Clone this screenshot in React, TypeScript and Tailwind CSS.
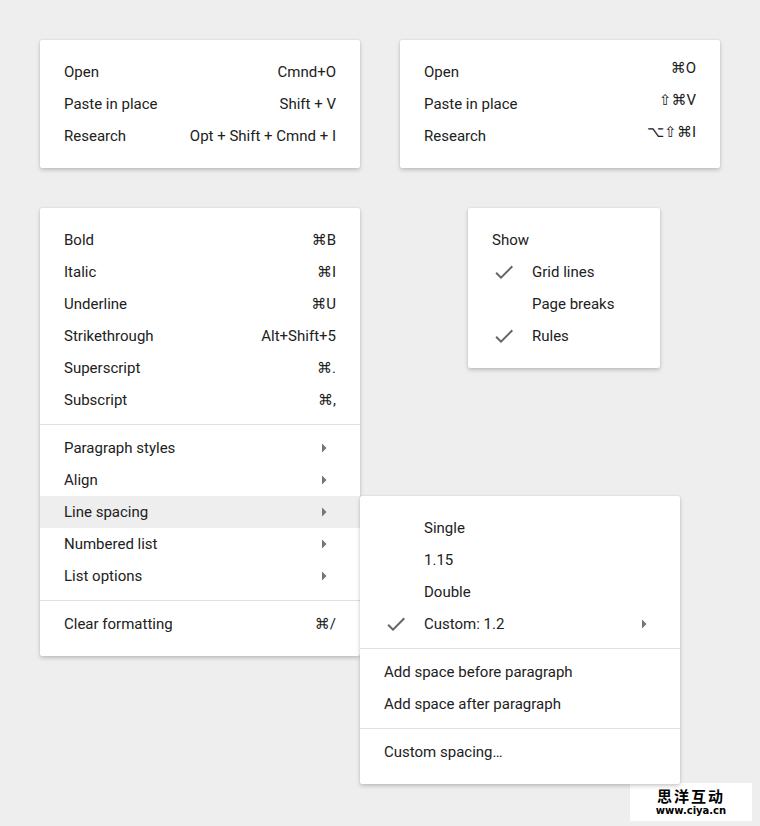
import React from "react";

type Item = {
  label: string;
  shortcut?: string;
  checked?: boolean;
  submenu?: boolean;
  active?: boolean;
};

const CheckIcon = () => (
  <svg width="24" height="24" viewBox="0 0 24 24" className="shrink-0 fill-[#666666]">
    <path d="M9 16.17L4.83 12l-1.42 1.41L9 19 21 7l-1.41-1.41z" />
  </svg>
);

const ArrowRight = () => (
  <svg width="24" height="24" viewBox="0 0 24 24" className="shrink-0 fill-[#757575]">
    <path d="M10 16.5l4.5-4.5L10 7.5z" />
  </svg>
);

const Divider = () => <div className="mt-2 mb-[7px] h-px bg-[#e0e0e0]" />;

const Row = ({
  item,
  indent,
  raiseShortcut,
  children,
}: {
  item: Item;
  indent?: boolean;
  raiseShortcut?: boolean;
  children?: React.ReactNode;
}) => (
  <div
    className={`relative flex h-8 items-center px-6 ${item.active ? "bg-[#eeeeee]" : ""}`}
  >
    {indent && (
      <div className="mr-4 w-6 shrink-0">{item.checked && <CheckIcon />}</div>
    )}
    <span className="flex-1 whitespace-nowrap">{item.label}</span>
    {item.shortcut && (
      <span className={`whitespace-nowrap ${raiseShortcut ? "-translate-y-1" : ""}`}>
        {item.shortcut}
      </span>
    )}
    {item.submenu && <ArrowRight />}
    {children}
  </div>
);

const Card = ({
  className,
  children,
}: {
  className?: string;
  children: React.ReactNode;
}) => (
  <div
    className={`rounded-[2px] bg-white py-4 shadow-[0_2px_4px_rgba(0,0,0,0.2),0_0_2px_rgba(0,0,0,0.08)] ${className ?? ""}`}
  >
    {children}
  </div>
);

const wordy: Item[] = [
  { label: "Open", shortcut: "Cmnd+O" },
  { label: "Paste in place", shortcut: "Shift + V" },
  { label: "Research", shortcut: "Opt + Shift + Cmnd + I" },
];

const symbols: Item[] = [
  { label: "Open", shortcut: "⌘O" },
  { label: "Paste in place", shortcut: "⇧⌘V" },
  { label: "Research", shortcut: "⌥⇧⌘I" },
];

const textStyles: Item[] = [
  { label: "Bold", shortcut: "⌘B" },
  { label: "Italic", shortcut: "⌘I" },
  { label: "Underline", shortcut: "⌘U" },
  { label: "Strikethrough", shortcut: "Alt+Shift+5" },
  { label: "Superscript", shortcut: "⌘." },
  { label: "Subscript", shortcut: "⌘," },
];

const paragraph: Item[] = [
  { label: "Paragraph styles", submenu: true },
  { label: "Align", submenu: true },
  { label: "Line spacing", submenu: true, active: true },
  { label: "Numbered list", submenu: true },
  { label: "List options", submenu: true },
];

const showItems: Item[] = [
  { label: "Grid lines", checked: true },
  { label: "Page breaks" },
  { label: "Rules", checked: true },
];

const spacing: Item[] = [
  { label: "Single" },
  { label: "1.15" },
  { label: "Double" },
  { label: "Custom: 1.2", checked: true, submenu: true },
];

const LineSpacingMenu = () => (
  <Card className="absolute left-full top-0 z-10 w-[320px]">
    {spacing.map((item) => (
      <Row key={item.label} item={item} indent />
    ))}
    <Divider />
    <Row item={{ label: "Add space before paragraph" }} />
    <Row item={{ label: "Add space after paragraph" }} />
    <Divider />
    <Row item={{ label: "Custom spacing…" }} />
  </Card>
);

export default function App() {
  return (
    <div className="relative min-h-[826px] bg-[#eeeeee] p-10 font-['Roboto','DejaVu_Sans',sans-serif] text-[15px] text-[#212121]">
      <div className="flex gap-10">
        <Card className="w-[320px]">
          {wordy.map((item) => (
            <Row key={item.label} item={item} />
          ))}
        </Card>
        <Card className="w-[320px]">
          {symbols.map((item) => (
            <Row key={item.label} item={item} raiseShortcut />
          ))}
        </Card>
      </div>

      <div className="mt-10 flex items-start">
        <Card className="relative w-[320px]">
          {textStyles.map((item) => (
            <Row key={item.label} item={item} />
          ))}
          <Divider />
          {paragraph.map((item) => (
            <Row key={item.label} item={item}>
              {item.active && <LineSpacingMenu />}
            </Row>
          ))}
          <Divider />
          <Row item={{ label: "Clear formatting", shortcut: "⌘/" }} />
        </Card>

        <Card className="ml-[108px] w-[192px]">
          <Row item={{ label: "Show" }} />
          {showItems.map((item) => (
            <Row key={item.label} item={item} indent />
          ))}
        </Card>
      </div>

      {/* watermark */}
      <div className="absolute bottom-[5px] right-[8px] flex h-[38px] w-[122px] flex-col items-center justify-center gap-[3px] bg-white">
        <span className="font-['Noto_Sans_CJK_SC',sans-serif] text-[15px] leading-[15px] font-bold tracking-[2px] text-black">
          思洋互动
        </span>
        <span className="font-['DejaVu_Sans',sans-serif] text-[10px] leading-[10px] font-bold text-black">
          www.ciya.cn
        </span>
      </div>
    </div>
  );
}
